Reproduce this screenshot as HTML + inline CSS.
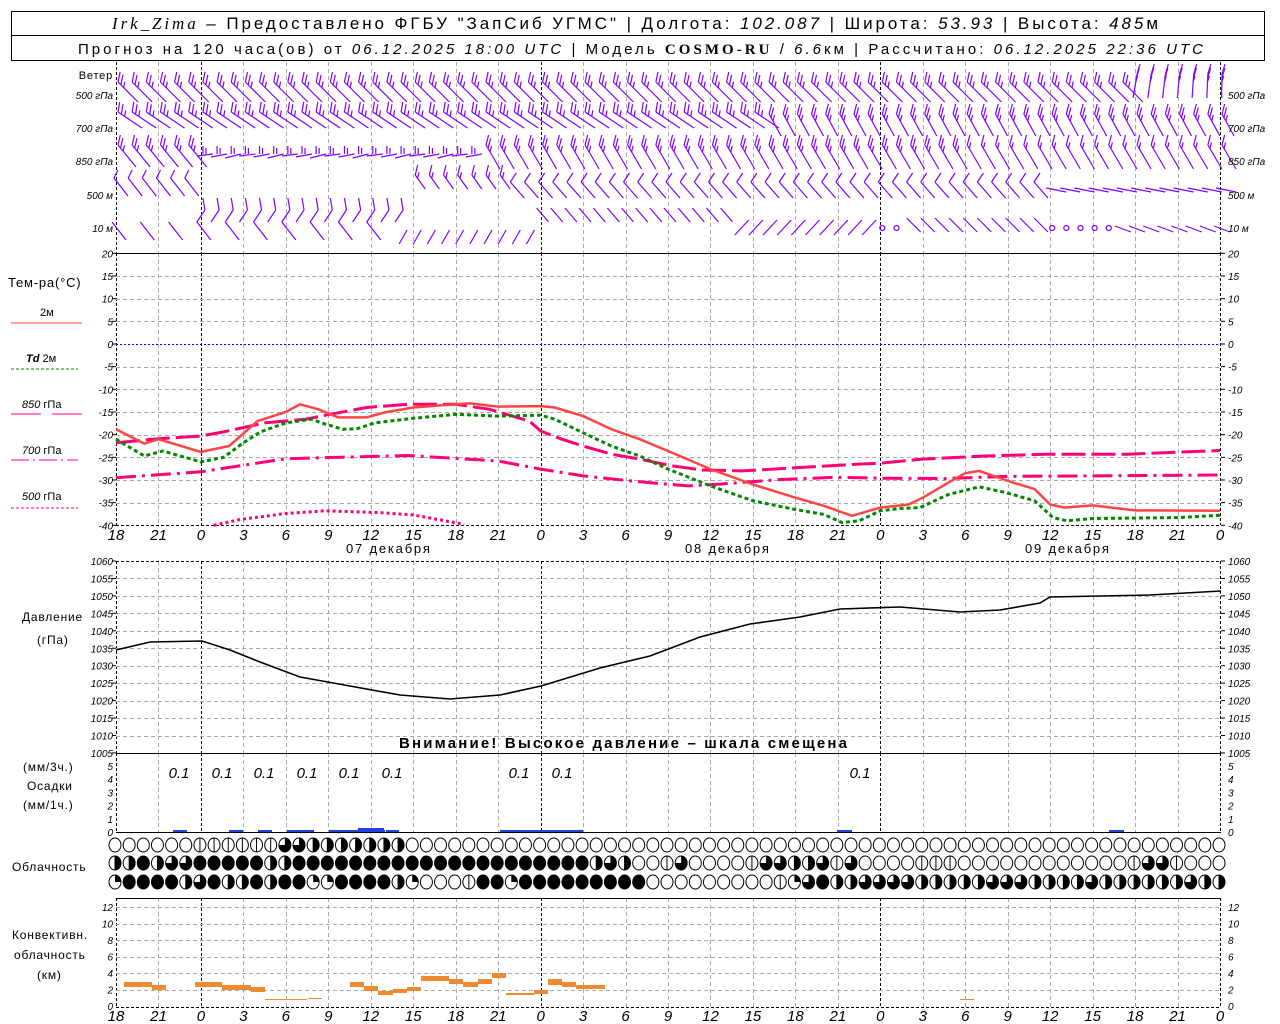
<!DOCTYPE html>
<html><head><meta charset="utf-8"><style>
html,body{margin:0;padding:0;background:#fff;width:1280px;height:1024px;overflow:hidden}
svg{display:block}
text{font-family:"Liberation Sans",sans-serif;fill:#000}
.n{font-style:italic;font-size:10px}
.h{font-style:italic;font-size:15px}
.l{font-size:12px;letter-spacing:0.8px}
</style></head><body>
<svg id="s" width="1280" height="1024" viewBox="0 0 1280 1024" xmlns="http://www.w3.org/2000/svg">
<rect x="11.5" y="11.5" width="1253" height="49" fill="none" stroke="#000"/>
<line x1="11" y1="35.5" x2="1265" y2="35.5" stroke="#000"/>
<text x="112" y="29" textLength="1046" lengthAdjust="spacing" style="font-size:17px"><tspan style="font-family:'Liberation Serif',serif;font-style:italic">Irk_Zima</tspan> – Предоставлено ФГБУ "ЗапСиб УГМС" | Долгота: <tspan font-style="italic">102.087</tspan> | Широта: <tspan font-style="italic">53.93</tspan> | Высота: <tspan font-style="italic">485</tspan>м</text>
<text x="78" y="54" textLength="1125" lengthAdjust="spacing" style="font-size:15px">Прогноз на 120 часа(ов) от <tspan font-style="italic">06.12.2025 18:00 UTC</tspan>  | Модель <tspan style="font-family:'Liberation Serif',serif;font-weight:bold">COSMO-RU</tspan> / <tspan font-style="italic">6.6</tspan>км | Рассчитано: <tspan font-style="italic">06.12.2025 22:36 UTC</tspan></text>
<g id="g"></g>
<text x="113" y="79" text-anchor="end" class="l" style="font-size:11px">Ветер</text>
<text x="113" y="99" text-anchor="end" class="n">500 гПа</text>
<text x="113" y="132" text-anchor="end" class="n">700 гПа</text>
<text x="113" y="165" text-anchor="end" class="n">850 гПа</text>
<text x="113" y="199" text-anchor="end" class="n">500 м</text>
<text x="113" y="232" text-anchor="end" class="n">10   м</text>
<text x="1228" y="99" class="n">500 гПа</text>
<text x="1228" y="132" class="n">700 гПа</text>
<text x="1228" y="165" class="n">850 гПа</text>
<text x="1228" y="199" class="n">500 м</text>
<text x="1228" y="232" class="n">10   м</text>
<text x="8" y="287" class="l" style="font-size:13px">Тем-ра(°C)</text>
<text x="40" y="316" style="font-size:11px">2м</text>
<line x1="11" y1="323" x2="82" y2="323" stroke="#f44"/>
<text x="26" y="362" style="font-size:11px"><tspan font-style="italic" font-weight="bold">Td</tspan>   2м</text>
<line x1="11" y1="369" x2="78" y2="369" stroke="#080" stroke-dasharray="3,2"/>
<text x="22" y="408" style="font-size:11px"><tspan font-style="italic">850</tspan>  гПа</text>
<line x1="11" y1="414" x2="41" y2="414" stroke="#f07"/><line x1="52" y1="414" x2="82" y2="414" stroke="#f07"/>
<text x="22" y="454" style="font-size:11px"><tspan font-style="italic">700</tspan>  гПа</text>
<line x1="11" y1="460" x2="78" y2="460" stroke="#f07" stroke-dasharray="18,4,2,4"/>
<text x="22" y="500" style="font-size:11px"><tspan font-style="italic">500</tspan>  гПа</text>
<line x1="11" y1="508" x2="78" y2="508" stroke="#f07" stroke-dasharray="3,2"/>
<text x="346" y="553" style="font-size:13px;letter-spacing:1.8px">07 декабря</text>
<text x="685" y="553" style="font-size:13px;letter-spacing:1.8px">08 декабря</text>
<text x="1025" y="553" style="font-size:13px;letter-spacing:1.8px">09 декабря</text>
<text x="22" y="621" class="l">Давление</text>
<text x="37" y="644" class="l">(гПа)</text>
<text x="399" y="748" textLength="448" lengthAdjust="spacing" style="font-size:15px;font-weight:bold">Внимание! Высокое давление – шкала смещена</text>
<text x="23" y="771" class="l">(мм/3ч.)</text>
<text x="27" y="790" class="l">Осадки</text>
<text x="23" y="809" class="l">(мм/1ч.)</text>
<text x="12" y="871" class="l">Облачность</text>
<text x="12" y="939" class="l">Конвективн.</text>
<text x="14" y="959" class="l">облачность</text>
<text x="37" y="979" class="l">(км)</text>
</svg>
<script>
var G=document.getElementById('g'),html='';
function X(h){return 116+h*14.154;}
function ln(x1,y1,x2,y2,st){html+='<line x1="'+x1+'" y1="'+y1+'" x2="'+x2+'" y2="'+y2+'" style="'+st+'"/>';}
function tx(x,y,s,cls,anc){html+='<text x="'+x+'" y="'+y+'" class="'+cls+'"'+(anc?' text-anchor="'+anc+'"':'')+'>'+s+'</text>';}
var GR='stroke:#aaa;stroke-width:1;stroke-dasharray:4,3';
var DK='stroke:#000;stroke-width:1;stroke-dasharray:3,2';
var panels=[[62,253],[253,525],[561,753],[753,832],[898,1007]];
panels.forEach(function(p){for(var h=0;h<=78;h+=3){var x=Math.round(X(h))+0.5;
 var day=(h==6||h==30||h==54);var edge=(h==0||h==78);
 ln(x,p[0],x,p[1],(day||edge)?DK:GR);}});
for(var t=-35;t<=15;t+=5){var y=Math.round(344-t*4.533)+0.5;if(t==0)ln(116,y,1221,y,'stroke:#00f;stroke-dasharray:2,2');else ln(116,y,1221,y,GR);}
for(var t=-40;t<=20;t+=5){var y=344-t*4.533;tx(113,y+4,t,'n','end');tx(1228,y+4,t,'n');ln(112,y,116,y,'stroke:#000');ln(1221,y,1225,y,'stroke:#000');}
ln(116,253.5,1221,253.5,'stroke:#000');ln(116,525.5,1221,525.5,DK);
for(var p=1010;p<=1055;p+=5){var y=Math.round(561+(1060-p)*3.49)+0.5;ln(116,y,1221,y,GR);}
for(var p=1005;p<=1060;p+=5){var y=561+(1060-p)*3.49;tx(113,y+4,p,'n','end');tx(1228,y+4,p,'n');ln(112,y,116,y,'stroke:#000');ln(1221,y,1225,y,'stroke:#000');}
ln(116,561.5,1221,561.5,DK);ln(116,753.5,1221,753.5,'stroke:#000');ln(116,832.5,1221,832.5,'stroke:#000');
for(var i=0;i<=5;i++){var y=832-i*13.2;tx(113,y+4,i,'n','end');tx(1228,y+4,i,'n');}
for(var k=2;k<=12;k+=2){var y=Math.round(1006-k*8.25)+0.5;ln(116,y,1221,y,GR);}
for(var k=0;k<=12;k+=2){var y=1006-k*8.25;tx(113,y+4,k,'n','end');tx(1228,y+4,k,'n');}
ln(116,898.5,1221,898.5,'stroke:#000');ln(116,1007.5,1221,1007.5,DK);
for(var h=0;h<=78;h+=3){var lab=(18+h)%24;tx(X(h),540,lab,'h','middle');tx(X(h),1021,lab,'h','middle');}
function pl(pts,st,fT){var s='';pts.forEach(function(p){s+=X(p[0]).toFixed(1)+','+(fT?fT(p[1]):p[1]).toFixed(1)+' ';});html+='<polyline points="'+s+'" fill="none" style="'+st+'"/>';}
function TY(t){return 344-t*4.533;}
var red=[[0,-18.8],[2,-22],[3,-21],[6,-23.8],[8,-22.5],[10,-17],[12,-15],[13,-13.3],[14.3,-14.4],[15.7,-16.2],[17.7,-16.2],[19,-15.1],[21,-14],[24,-13.3],[25,-13.1],[27,-13.8],[30,-13.7],[31,-14],[33,-15.9],[35,-18.8],[37,-21],[39,-23.6],[42,-27.6],[45,-31],[48,-33.9],[50,-35.7],[52,-37.9],[54,-36.1],[56,-35.4],[57,-33.9],[58.8,-30.6],[60,-28.5],[61,-28],[62,-29.1],[63.4,-30.6],[64.9,-32],[66,-35.4],[67,-36.1],[69,-35.6],[72,-36.7],[78,-36.8]];
var grn=[[0,-21],[2,-24.7],[3.3,-23.6],[6,-26],[7.6,-25],[9,-21.8],[10.2,-19.4],[12,-17.4],[13.8,-16.6],[14.8,-17.7],[16,-18.8],[17,-18.7],[18.3,-17.4],[21,-16.4],[24,-15.5],[27,-15.9],[30,-15.7],[31,-16.6],[33,-19.6],[35,-22.5],[37,-24.7],[39,-27.6],[42,-31.3],[45,-34.6],[48,-36.5],[50,-37.6],[51.3,-39.4],[52.5,-39],[54,-36.8],[55.4,-36.3],[56.8,-36.1],[58.8,-33.2],[61,-31.5],[62.9,-32.8],[64.9,-34.6],[66.2,-38.3],[67.2,-39],[69,-38.5],[75,-38.3],[78,-37.8]];
var p850=[[0,-21.8],[3,-20.9],[6,-20.3],[7.6,-19.4],[10.5,-17.4],[13.4,-16.6],[14.8,-15.7],[17.7,-14],[20.6,-13.3],[24,-13.3],[26.4,-14.4],[29.2,-17],[30,-19.2],[31.5,-21],[33,-22.5],[35,-24.3],[37,-25.4],[39.3,-26.9],[41.4,-27.8],[44.2,-28],[48,-27.3],[52.5,-26.5],[54,-26.3],[57,-25.4],[61.4,-24.7],[65.8,-24.3],[71.5,-24.3],[78,-23.5]];
var p700=[[0,-29.5],[6,-28.2],[12,-25.3],[20.6,-24.6],[27,-25.8],[30,-27.6],[33,-29.1],[37,-30.4],[40.4,-31.3],[42.7,-30.9],[47,-29.9],[50.8,-29.4],[54.2,-29.6],[58.5,-29.7],[62.9,-29.2],[68.6,-29.1],[78,-28.9]];
var p500=[[6.9,-40],[8.8,-38.7],[12,-37.4],[14.8,-36.8],[18.6,-37.2],[21,-37.7],[24.6,-39.8]];
pl(p500,'stroke:#f07;stroke-width:3;stroke-dasharray:3,3',TY);
pl(p700,'stroke:#f07;stroke-width:3;stroke-dasharray:20,6,3,6',TY);
pl(p850,'stroke:#f07;stroke-width:3;stroke-dasharray:24,6',TY);
pl(grn,'stroke:#080;stroke-width:3;stroke-dasharray:4,3',TY);
pl(red,'stroke:#f44;stroke-width:2.5',TY);
var pr=[[116,650],[150,642],[202,641],[230,650],[260,662],[300,677],[350,686],[400,695],[450,699],[500,695],[541,686],[600,668],[650,656],[700,637],[750,624],[800,617],[840,609],[900,607],[960,612],[1000,610],[1040,603],[1050,597],[1100,596],[1150,595],[1221,591]];
var s='';pr.forEach(function(p){s+=p[0]+','+p[1]+' ';});html+='<polyline points="'+s+'" fill="none" stroke="#000" stroke-width="1.6"/>';
[179,222,264,307,349,392,519,562,860].forEach(function(x){tx(x,778,'0.1','h','middle');});
[[173,187],[229,243],[258,272],[287,314],[329,372],[372,385],[386,399],[500,583],[837,852],[1109,1124]].forEach(function(b){html+='<rect x="'+b[0]+'" y="830" width="'+(b[1]-b[0])+'" height="2" fill="#2040e0"/>';});
html+='<rect x="358" y="828" width="26" height="4" fill="#2040e0"/>';
[[124,152,982,5],[152,166,985,5],[195,222,982,5],[222,251,985,5],[251,265,987,5],[265,307,999,1],[308,322,998,1],[350,364,982,5],[364,378,986,5],[378,393,991,4],[393,407,989,4],[407,421,987,4],[421,449,976,5],[449,463,979,5],[463,478,982,5],[478,492,979,5],[492,506,973,5],[506,534,993,2],[534,548,990,4],[548,562,979,6],[562,576,982,5],[576,605,985,4],[960,974,999,1]].forEach(function(b){html+='<rect x="'+b[0]+'" y="'+b[2]+'" width="'+(b[1]-b[0])+'" height="'+b[3]+'" fill="#f08a30"/>';});
var rows=[[845,'OOOOOOVVVVVVTTHHHHHHH'],[863,'HHFHTTFFFFFHHFFFFFFFFFFFFFFFFFFFFFHTHOOVTOOOOVTTHHTVTOOOOVVVOOOOOOOOOOOOVTTVOOO'],[882,'QFFFFHTFHHFHFFQQFFFFHQOOOVFFQFFFFFFFFFOOOOOOOOOVQTFHHTTTTHHHHHTTTHHHHTHHHHHHTHH']];
rows.forEach(function(r){var y=r[0];for(var h=0;h<=78;h++){var c=r[1][h]||'O';var x=X(h)-1;var rx=6,ry=7;
 html+='<ellipse cx="'+x+'" cy="'+y+'" rx="'+rx+'" ry="'+ry+'" fill="'+(c=='F'?'#000':'#fff')+'" stroke="#000"/>';
 if(c=='H')html+='<path d="M'+x+','+(y-ry)+' A'+rx+','+ry+' 0 0 1 '+x+','+(y+ry)+'Z"/>';
 if(c=='T')html+='<path d="M'+x+','+(y-ry)+' A'+rx+','+ry+' 0 1 1 '+(x-rx)+','+y+' L'+x+','+y+'Z"/>';
 if(c=='Q')html+='<path d="M'+x+','+(y-ry)+' A'+rx+','+ry+' 0 0 1 '+(x+rx)+','+y+' L'+x+','+y+'Z"/>';
 if(c=='V'||c=='H')html+='<line x1="'+x+'" y1="'+(y-ry)+'" x2="'+x+'" y2="'+(y+ry)+'" stroke="#000"/>';
}});
var P='stroke:#8000ff;stroke-width:1.2';
function B(x,y,dx,dy,n){ln(x,y,x+dx,y+dy,P);var L=Math.hypot(dx,dy),ux=dx/L,uy=dy/L;for(var i=0;i<n;i++){var bx=x+ux*i*4,by=y+uy*i*4;var len=i==n-1&&n>1?6:10;ln(bx,by,bx+uy*len*0.3,by-len,P);}}
for(var h=0;h<=78;h++){var x=X(h)+2;
 if(h<72)B(x,82,20,20,3);else B(x,74,-4+(h-72)*0.6,24,3);
 if(h<46)B(x,112,24,16,3);else B(x,114,12,22,3);
 if(h<6)B(x,145,18,22,3);else if(h<26){ln(x-6,156+(h%3),x+10,154,P);ln(x,154,x,146,P);ln(x+3,154,x+3,148,P);}else B(x,145,14,24,h<60?3:2);
 if(h<6){ln(x,170,x-4,178,P);ln(x-4,178,x+10,196,P);}else if(h<21){ln(x,198,x+2,210,P);ln(x+2,210,x-6,222,P);}else if(h<28){B(x,175,10,14,2);}else if(h<66){ln(x+2,173,x-4,182,P);ln(x-4,182,x+10,198,P);}else{ln(x-6,188,x+14,192,P);}
 if(h>=54&&h<56||h>=66&&h<=70){html+='<circle cx="'+x+'" cy="228" r="2.5" fill="none" style="'+P+'"/>';}
 else if(h%2==0||h>20){if(h<20)ln(x-6,222,x+8,240,P);else if(h<30)ln(x+6,230,x-2,244,P);else if(h<44){ln(x-6,208,x+6,222,P);}else if(h<54){ln(x+8,220,x-6,235,P);}else if(h<66){ln(x-4,218,x+10,232,P);}else{ln(x-8,226,x+8,232,P);}}
}
G.innerHTML=html;
</script>
</body></html>
